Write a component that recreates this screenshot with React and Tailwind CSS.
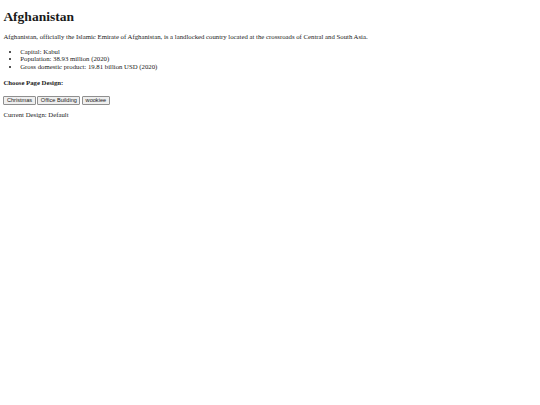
export default function App() {
  const designs = ["Christmas", "Office Building", "wookiee"];
  return (
    <div className="min-h-screen bg-white px-[3.375px] pb-[3.375px] pt-[0.1px] text-[#1a1a1a] font-['Liberation_Serif',serif]">
      <h1 className="mt-[8.8px] mb-[9px] text-[13.5px] font-bold leading-[15.5px]">Afghanistan</h1>
      <p className="my-[6.5px] text-[6.75px] leading-[7.77px]">
        Afghanistan, officially the Islamic Emirate of Afghanistan, is a landlocked country located at the crossroads of Central and South Asia.
      </p>
      <ul className="my-[6.5px] list-disc pl-[16.875px] text-[6.75px] leading-[7.77px]">
        <li>Capital: Kabul</li>
        <li>Population: 38.93 million (2020)</li>
        <li>Gross domestic product: 19.81 billion USD (2020)</li>
      </ul>
      <h4 className="mt-[8.3px] mb-[8.9px] text-[6.75px] font-bold leading-[7.77px]">Choose Page Design:</h4>
      <div className="flex gap-[1.7px]">
        {designs.map((d) => (
          <button
            key={d}
            className="h-[8.9px] rounded-[1px] border border-[#8f8f8f] bg-[#efefef] px-[2.5px] text-[5.625px] leading-none text-[#1a1a1a] font-['Liberation_Sans',sans-serif]"
          >
            {d}
          </button>
        ))}
      </div>
      <p className="my-[6.2px] text-[6.75px] leading-[7.77px]">Current Design: Default</p>
    </div>
  );
}
